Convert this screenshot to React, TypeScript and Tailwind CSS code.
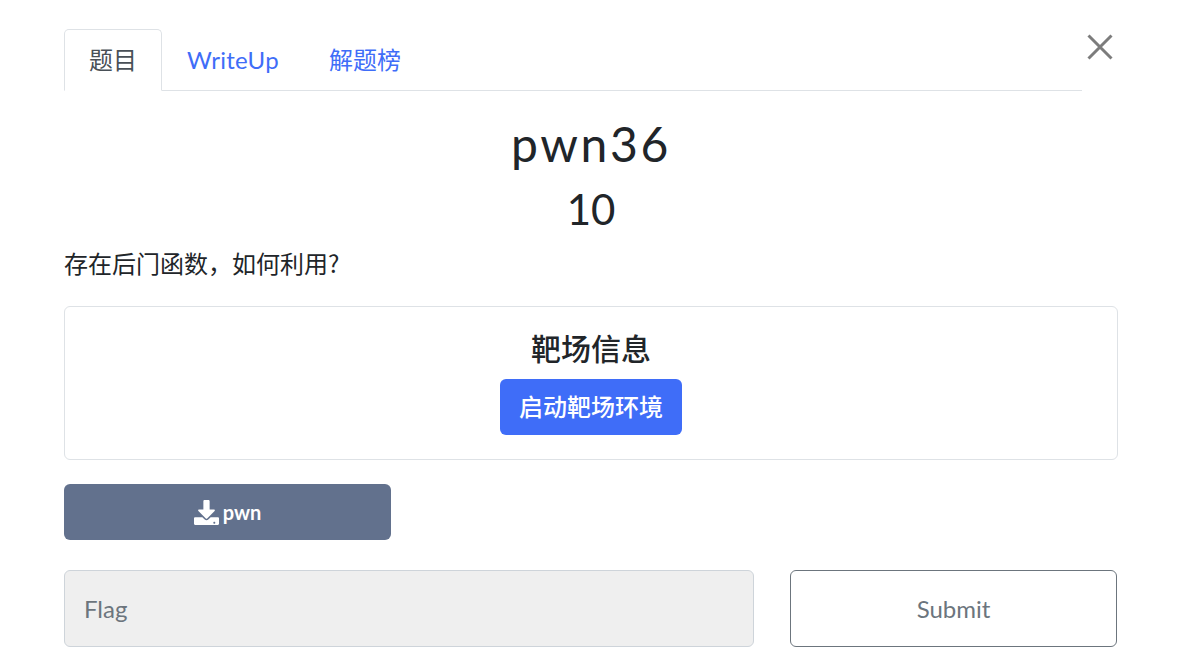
import React from "react";

const F = '"Lato","Noto Sans CJK SC",sans-serif';

export default function App() {
  return (
    <div className="relative w-[1187px] h-[649px] overflow-hidden bg-white text-[#212529]" style={{ fontFamily: F }}>
      <div className="pl-16 pr-[69px]">
        <div className="pt-[29px]">
          <div className="flex w-[1018px] h-[62px] border-b border-[#dee2e6] text-[24px]">
            <div className="w-[98px] h-[62px] border border-[#dee2e6] border-b-white rounded-t-[5px] bg-white text-[#495057] flex items-center justify-center">题目</div>
            <div className="pl-[25px] pr-[25px] flex items-center text-[#3f6df8] tracking-[0.3px]">WriteUp</div>
            <div className="pl-[25px] pr-[25px] flex items-center text-[#3f6df8]">解题榜</div>
          </div>
        </div>
        <h1 className="text-center text-[48px] leading-[58px] mt-6 tracking-[2.6px] font-normal">pwn36</h1>
        <h3 className="text-center text-[42px] leading-[50px] mt-[11px]">10</h3>
        <p className="text-[24px] leading-9 mt-[11px]">存在后门函数，如何利用<span style={{ fontFamily: '"Noto Sans CJK SC",sans-serif' }}>?</span></p>
        <div className="mt-6 h-[154px] border border-[#dee2e6] rounded-[6px] flex flex-col items-center pt-5">
          <div className="text-[30px] leading-[42px] font-medium">靶场信息</div>
          <button className="mt-[10px] w-[182px] h-14 rounded-[6px] bg-[#3f6df8] text-white text-[24px] font-medium">启动靶场环境</button>
        </div>
        <button className="mt-6 flex w-[327px] h-14 rounded-[6px] bg-[#62718d] text-white text-[20px] font-bold items-center justify-center gap-[4px]">
          <svg width="25" height="25" viewBox="0 0 512 512" fill="currentColor"><path d="M216 0h80c13.300 0 24 10.700 24 24v168h87.700c17.800 0 26.700 21.500 14.100 34.100L269.700 378.300c-7.500 7.500-19.800 7.500-27.300 0L90.100 226.100c-12.600-12.600-3.700-34.100 14.100-34.100H192V24c0-13.300 10.700-24 24-24zm296 376v112c0 13.300-10.700 24-24 24H24c-13.300 0-24-10.700-24-24V376c0-13.300 10.700-24 24-24h146.700l49 49c20.100 20.100 52.500 20.100 72.600 0l49-49H488c13.300 0 24 10.700 24 24zm-76 88c0-11-9-20-20-20s-20 9-20 20 9 20 20 20 20-9 20-20z"/></svg>
          pwn
        </button>
        <div className="mt-[30px] flex gap-9">
          <div className="w-[690px] h-[77px] rounded-[6px] border border-[#ced4da] bg-[#efefef] text-[#6c757d] text-[24px] flex items-center px-[19px]">Flag</div>
          <div className="w-[327px] h-[77px] rounded-[6px] border border-[#6c757d] text-[#6c757d] text-[24px] flex items-center justify-center">Submit</div>
        </div>
      </div>
      <svg className="absolute left-[1087px] top-[34px]" width="26" height="26" viewBox="0 0 26 26" stroke="#7c7c7c" strokeWidth="3" fill="none"><path d="M1.500 1.500L24.500 24.500M24.500 1.500L1.500 24.500"/></svg>
    </div>
  );
}
